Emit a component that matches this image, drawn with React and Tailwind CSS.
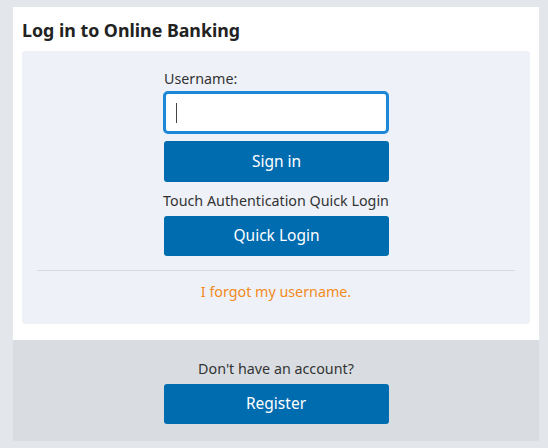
export default function App() {
  const font = { fontFamily: '"Noto Sans", "Open Sans", sans-serif' };
  return (
    <div className="w-[548px] h-[448px] bg-[#e3e7eb] pt-[7px] pl-[13px] pr-[9px] overflow-hidden" style={font}>
      <div className="bg-white px-[9px] pb-[16px]">
        <h1 className="text-[17.8px] font-bold text-[#222] leading-[24px] pt-[11px] pb-[9px] whitespace-nowrap">Log in to Online Banking</h1>
        <div className="bg-[#eef1f8] rounded-[3px] px-[15px] pt-[18px] pb-[22px]">
          <div className="w-[226px] mx-auto flex flex-col">
            <label className="text-[14.3px] leading-[20px] text-[#333] pl-[1px]">Username:</label>
            <div className="mt-[2px] h-[43px] border-[3px] border-[#1d87d9] rounded-[5px] bg-white flex items-center pl-[10px]">
              <span className="w-px h-[20px] bg-[#444]"></span>
            </div>
            <button className="mt-[7px] h-[41px] w-[225px] ml-[1px] bg-[#006cb0] rounded-[3px] text-white text-[15.5px]">Sign in</button>
            <div className="mt-[9px] text-[14.3px] leading-[20px] text-[#333] text-center whitespace-nowrap">Touch Authentication Quick Login</div>
            <button className="mt-[5px] h-[40px] w-[225px] ml-[1px] bg-[#006cb0] rounded-[3px] text-white text-[15.5px]">Quick Login</button>
          </div>
          <div className="mt-[14px] border-t border-[#d5d9e0]"></div>
          <div className="mt-[11px] text-center text-[14.3px] leading-[20px] text-[#f28a1c]">I forgot my username.</div>
        </div>
      </div>
      <div className="bg-[#d9dde1] h-[101px] flex flex-col items-center pt-[19px]">
        <div className="text-[14.3px] leading-[20px] text-[#333]">Don't have an account?</div>
        <button className="mt-[5px] h-[40px] w-[225px] bg-[#006cb0] rounded-[3px] text-white text-[15.5px]">Register</button>
      </div>
    </div>
  );
}
